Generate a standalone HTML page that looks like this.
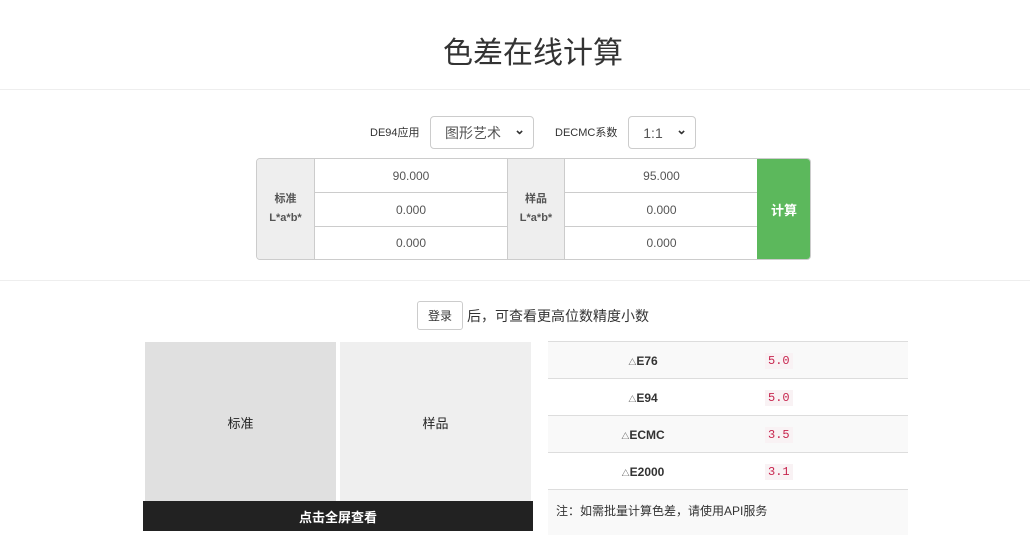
<!DOCTYPE html>
<html><head><meta charset="utf-8"><style>
*{box-sizing:border-box;margin:0;padding:0}
body{width:1030px;height:557px;background:#fff;position:relative;overflow:hidden;font-family:"Liberation Sans","Noto Sans CJK SC",sans-serif;color:#333}
.a{position:absolute}
.c{display:flex;align-items:center;justify-content:center}
.sel{border:1px solid #ccc;border-radius:4px;background:#fff;font-size:14px;color:#555}
.sel span.v{position:absolute;right:8px;top:5px;font-size:13px;color:#333;font-weight:bold}
.inp{background:#fff;border-bottom:1px solid #ccc;font-size:12px;color:#555}
.lab{background:#eee;font-size:11px;color:#555;text-align:center;line-height:19px;font-weight:bold}
.row{position:absolute;left:548px;width:360px;border-top:1px solid #ddd;font-size:12px}
.row b{position:absolute;left:0;width:190px;text-align:center;font-size:12px}
code.a{left:765px;font-family:"Liberation Mono",monospace;color:#c7254e;background:#f9f2f4;padding:1px 3px;font-size:12px}
</style></head><body>
<div class="a" style="left:0;top:28px;width:1030px;text-align:center;font-size:30px;color:#333;padding-left:36px">色差在线计算</div>
<div class="a" style="left:0;top:89px;width:1030px;border-top:1px solid #eee"></div>
<div class="a" style="left:0;top:280px;width:1030px;border-top:1px solid #eee"></div>

<div class="a" style="left:370px;top:124px;font-size:11px">DE94应用</div>
<div class="a sel c" style="left:430px;top:116px;width:104px;height:33px;padding-right:18px">图形艺术<span class="v a">&#8964;</span></div>
<div class="a" style="left:555px;top:124px;font-size:11px">DECMC系数</div>
<div class="a sel c" style="left:628px;top:116px;width:68px;height:33px;padding-right:18px">1:1<span class="v a">&#8964;</span></div>

<div class="a" style="left:256px;top:158px;width:555px;height:102px;border:1px solid #ccc;border-radius:4px;overflow:hidden;background:#fff">
 <div class="a lab c" style="left:0;top:0;width:58px;height:100px;border-right:1px solid #ccc;flex-direction:column">标准<br>L*a*b*</div>
 <div class="a inp c" style="left:58px;top:0;width:192px;height:34px">90.000</div>
 <div class="a inp c" style="left:58px;top:34px;width:192px;height:34px">0.000</div>
 <div class="a c" style="left:58px;top:68px;width:192px;height:32px;font-size:12px;color:#555">0.000</div>
 <div class="a lab c" style="left:250px;top:0;width:58px;height:100px;border-left:1px solid #ccc;border-right:1px solid #ccc;flex-direction:column">样品<br>L*a*b*</div>
 <div class="a inp c" style="left:308px;top:0;width:193px;height:34px">95.000</div>
 <div class="a inp c" style="left:308px;top:34px;width:193px;height:34px">0.000</div>
 <div class="a c" style="left:308px;top:68px;width:193px;height:32px;font-size:12px;color:#555">0.000</div>
 <div class="a c" style="left:500px;top:-1px;width:54px;height:102px;background:#5cb85c;color:#fff;font-size:13px;font-weight:bold">计算</div>
</div>

<div class="a c" style="left:417px;top:301px;width:46px;height:29px;border:1px solid #ccc;border-radius:3px;font-size:12px">登录</div>
<div class="a" style="left:467px;top:306px;font-size:14px">后，可查看更高位数精度小数</div>

<div class="a c" style="left:145px;top:342px;width:191px;height:160px;background:#e0e0e0;font-size:13px;color:#222">标准</div>
<div class="a c" style="left:340px;top:342px;width:191px;height:160px;background:#efefef;font-size:13px;color:#222">样品</div>
<div class="a c" style="left:143px;top:501px;width:390px;height:30px;background:#222;color:#fff;font-size:13px;font-weight:bold">点击全屏查看</div>

<div class="row" style="top:341px;height:38px;background:#f9f9f9"><b style="top:12px"><span style="font-size:8px;font-weight:normal">△</span>E76</b></div>
<div class="row" style="top:378px;height:38px"><b style="top:12px"><span style="font-size:8px;font-weight:normal">△</span>E94</b></div>
<div class="row" style="top:415px;height:38px;background:#f9f9f9"><b style="top:12px"><span style="font-size:8px;font-weight:normal">△</span>ECMC</b></div>
<div class="row" style="top:452px;height:38px"><b style="top:12px"><span style="font-size:8px;font-weight:normal">△</span>E2000</b></div>
<div class="row" style="top:489px;height:46px;background:#f9f9f9"><span class="a" style="left:8px;top:12px;font-size:12px">注：如需批量计算色差，请使用API服务</span></div>
<code class="a" style="top:353px">5.0</code>
<code class="a" style="top:390px">5.0</code>
<code class="a" style="top:427px">3.5</code>
<code class="a" style="top:464px">3.1</code>
</body></html>
